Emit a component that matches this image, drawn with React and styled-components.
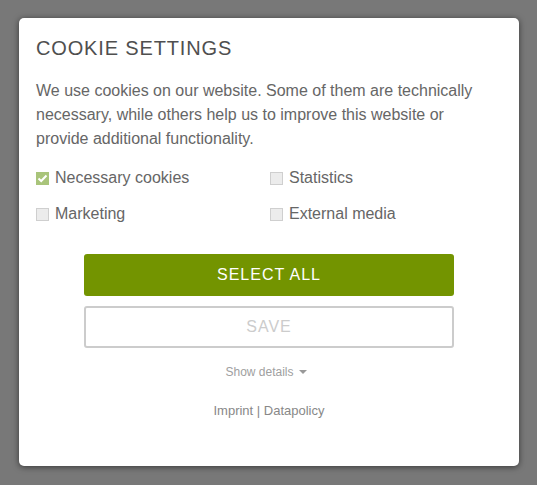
import styled, { createGlobalStyle } from "styled-components";

const GlobalStyle = createGlobalStyle`
  html, body {
    margin: 0;
    padding: 0;
    background: #787878;
    font-family: "Liberation Sans", Arial, sans-serif;
  }
`;

const Overlay = styled.div`
  width: 537px;
  height: 485px;
  padding: 18px 0 0 19px;
  box-sizing: border-box;
`;

const Modal = styled.div`
  width: 500px;
  height: 448px;
  box-sizing: border-box;
  background: #fff;
  border-radius: 5px;
  box-shadow: 0 1px 6px rgba(0, 0, 0, 0.55);
  padding: 20px 17px 0 17px;
  display: flex;
  flex-direction: column;
`;

const Title = styled.h2`
  margin: 0;
  font-size: 20px;
  font-weight: normal;
  letter-spacing: 0.85px;
  color: #4f4f4f;
  line-height: 20px;
`;

const Intro = styled.p`
  margin: 21px 0 0 0;
  max-width: 445px;
  font-size: 16px;
  line-height: 24px;
  color: #666;
`;

const Options = styled.div`
  display: grid;
  grid-template-columns: 234px 1fr;
  row-gap: 18px;
  margin-top: 18px;
`;

const Option = styled.label`
  display: flex;
  align-items: center;
  gap: 6px;
  font-size: 16px;
  line-height: 18px;
  color: #666;
`;

const Box = styled.span`
  width: 13px;
  height: 13px;
  box-sizing: border-box;
  background: ${(props) => (props.checked ? "#a9c47a" : "#ececec")};
  border: 1px solid ${(props) => (props.checked ? "#a9c47a" : "#cfcfcf")};
  display: flex;
  align-items: center;
  justify-content: center;
`;

const Actions = styled.div`
  display: flex;
  flex-direction: column;
  align-items: center;
  margin-top: 31px;
`;

const Button = styled.button`
  width: 370px;
  height: 42px;
  box-sizing: border-box;
  border-radius: 3px;
  font-family: "Liberation Sans", Arial, sans-serif;
  font-size: 16px;
  letter-spacing: 1px;
  border: ${(props) => (props.primary ? "none" : "2px solid #cccccc")};
  background: ${(props) => (props.primary ? "#739400" : "#fff")};
  color: ${(props) => (props.primary ? "#fff" : "#cccccc")};
  margin-bottom: 10px;
  cursor: pointer;
`;

const Details = styled.div`
  margin-top: 7px;
  font-size: 12px;
  color: #a0a0a0;
  display: flex;
  align-items: center;
  gap: 5px;
  transform: translateX(-3px);
`;

const Caret = styled.span`
  width: 0;
  height: 0;
  border-left: 4px solid transparent;
  border-right: 4px solid transparent;
  border-top: 4px solid #999;
`;

const Links = styled.div`
  margin-top: 24px;
  font-size: 13px;
  color: #888;
`;

const Check = () => (
  <svg width="11" height="9" viewBox="0 0 11 9">
    <path d="M1.5 4.5 L4.2 7 L9.5 1.5" fill="none" stroke="#fff" strokeWidth="2" />
  </svg>
);

const options = [
  { label: "Necessary cookies", checked: true },
  { label: "Statistics" },
  { label: "Marketing" },
  { label: "External media" },
];

export default function App() {
  return (
    <>
      <GlobalStyle />
      <Overlay>
        <Modal>
          <Title>COOKIE SETTINGS</Title>
          <Intro>
            We use cookies on our website. Some of them are technically necessary, while
            others help us to improve this website or provide additional functionality.
          </Intro>
          <Options>
            {options.map((o) => (
              <Option key={o.label}>
                <Box checked={o.checked}>{o.checked && <Check />}</Box>
                {o.label}
              </Option>
            ))}
          </Options>
          <Actions>
            <Button primary>SELECT ALL</Button>
            <Button>SAVE</Button>
            <Details>
              Show details <Caret />
            </Details>
            <Links>Imprint | Datapolicy</Links>
          </Actions>
        </Modal>
      </Overlay>
    </>
  );
}
